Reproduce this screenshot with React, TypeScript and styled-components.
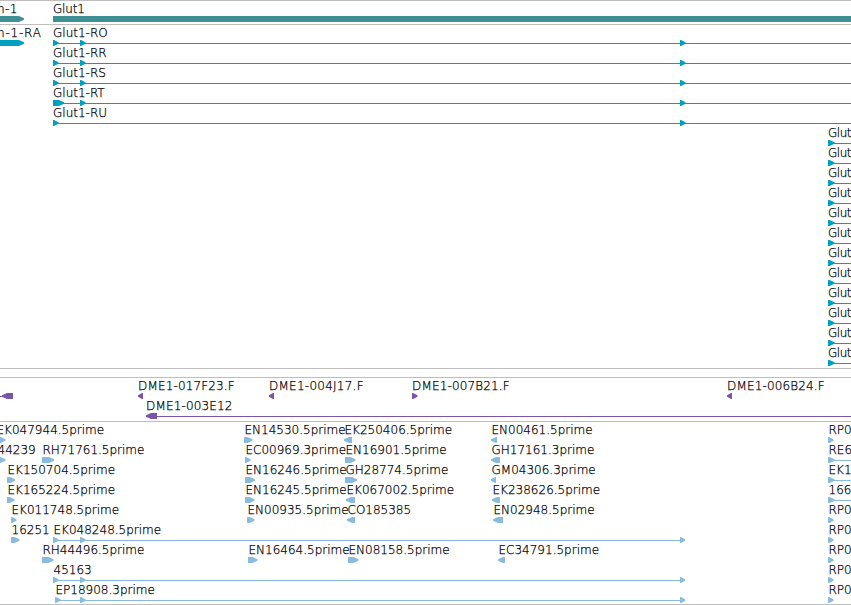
import React from "react";
import styled, { createGlobalStyle } from "styled-components";

type Direction = "right" | "left";

// [offset from the feature start, width]
type Block = [number, number];

interface FeatureData {
  label: string;
  start: number;
  span: number;
  blocks: Block[];
  dir?: Direction;
  spacing?: number;
}

interface TrackData {
  name: string;
  color: string;
  spacing?: number;
  labelShift?: number;
  rows: FeatureData[][];
}

const VIEW_END = 851;

const GlobalStyle = createGlobalStyle`
  body {
    margin: 0;
    background: #ffffff;
    overflow: hidden;
  }
`;

const Browser = styled.main`
  display: flex;
  flex-direction: column;
  width: 851px;
  height: 605px;
  overflow: hidden;
  font-family: "DejaVu Sans", sans-serif;
  font-size: 12px;
  font-weight: 200;
  color: #000000;
  -webkit-text-stroke: 0.25px #000000;
`;

const Panel = styled.section<{ $last?: boolean }>`
  border-bottom: 1px solid #bebebe;
  margin-bottom: ${({ $last }) => ($last ? 0 : 8)}px;
`;

const Track = styled.div<{ $tight?: boolean }>`
  display: flex;
  flex-direction: column;
  border-top: 1px solid #bebebe;
  padding: 1px 0 ${({ $tight }) => ($tight ? 1 : 2)}px;
`;

/* every feature of a row shares one grid cell, shifted by its start */
const Row = styled.div`
  display: grid;
  height: 20px;
  width: 851px;
  overflow: hidden;
`;

const FeatureBox = styled.div<{ $start: number }>`
  grid-area: 1 / 1;
  display: flex;
  flex-direction: column;
  align-items: flex-start;
  justify-self: start;
  margin-left: ${({ $start }) => $start}px;
`;

const Label = styled.span<{ $shift: number; $spacing: number }>`
  height: 14px;
  line-height: 15px;
  white-space: nowrap;
  margin-left: ${({ $shift }) => $shift}px;
  letter-spacing: ${({ $spacing }) => $spacing}px;
`;

const Glyph = styled.svg<{ $color: string }>`
  display: block;
  flex: none;
  fill: ${({ $color }) => $color};
`;

// most features are one short arrow
const f = (
  label: string,
  start: number,
  width: number,
  dir: Direction = "right",
  spacing?: number
): FeatureData => ({ label, start, span: width, blocks: [[0, width]], dir, spacing });

// arrows joined by an intron line
const spliced = (label: string, start: number, end: number, blocks: Block[]): FeatureData => ({
  label,
  start,
  span: end - start,
  blocks,
});

const geneTrack: TrackData = {
  name: "genes",
  color: "#3f8f96",
  rows: [[f("n-1", -3, 27, "right", 0.4), f("Glut1", 53, 810, "right", -0.2)]],
};

const transcriptTrack: TrackData = {
  name: "transcripts",
  color: "#00a0c0",
  rows: [
    [
      f("n-1-RA", -3, 27, "right", 0.8),
      spliced("Glut1-RO", 53, VIEW_END, [[0, 5.5], [27, 5.5], [627, 5.5]]),
    ],
    [spliced("Glut1-RR", 53, VIEW_END, [[0, 5.5], [27, 5.5], [627, 5.5]])],
    [spliced("Glut1-RS", 53, VIEW_END, [[0, 5.5], [27, 5.5], [627, 5.5]])],
    [spliced("Glut1-RT", 53, VIEW_END, [[0, 11], [27, 5.5], [627, 5.5]])],
    [spliced("Glut1-RU", 53, VIEW_END, [[0, 5.5], [627, 5.5]])],
    ...Array.from({ length: 12 }, () => [
      { ...spliced("Glut", 828, VIEW_END, [[0, 6.5]]), spacing: -0.5 },
    ]),
  ],
};

const bacTrack: TrackData = {
  name: "clones",
  color: "#7755aa",
  spacing: 0.15,
  rows: [
    [
      { label: "", start: -4, span: 17, blocks: [[6, 11]], dir: "left" },
      f("DME1-017F23.F", 138, 5, "left"),
      f("DME1-004J17.F", 269, 5, "left", 0.25),
      f("DME1-007B21.F", 412, 5.5),
      f("DME1-006B24.F", 727, 5, "left"),
    ],
    [{ label: "DME1-003E12", start: 146, span: 705, blocks: [[0, 11]], dir: "left" }],
  ],
};

const estTrack: TrackData = {
  name: "ests",
  color: "#88bbdd",
  labelShift: 0.5,
  rows: [
    [
      f("EK047944.5prime", -4, 9.5),
      f("EN14530.5prime", 244, 8.5),
      f("EK250406.5prime", 344, 8, "left"),
      f("EN00461.5prime", 491, 6, "left"),
      f("RP0", 828, 5.5),
    ],
    [
      f("44239", -3, 8.5),
      f("RH71761.5prime", 42, 12),
      f("EC00969.3prime", 245, 5.5),
      f("EN16901.5prime", 345, 10.5),
      f("GH17161.3prime", 491, 9, "left"),
      spliced("RE6", 828, VIEW_END, [[0, 6.5]]),
    ],
    [
      f("EK150704.5prime", 7, 8),
      f("EN16246.5prime", 245, 10),
      f("GH28774.5prime", 345, 12),
      f("GM04306.3prime", 491, 5, "left"),
      spliced("EK1", 828, VIEW_END, [[0, 6.5]]),
    ],
    [
      f("EK165224.5prime", 7, 7.5),
      f("EN16245.5prime", 245, 9.5),
      f("EK067002.5prime", 346, 9, "left"),
      f("EK238626.5prime", 492, 8, "left"),
      spliced("166", 828, VIEW_END, [[0, 6.5]]),
    ],
    [
      f("EK011748.5prime", 11, 5.5),
      f("EN00935.5prime", 247, 7.5),
      f("CO185385", 347, 8, "left"),
      f("EN02948.5prime", 493, 10, "left"),
      f("RP0", 828, 5.5),
    ],
    [
      f("16251", 11, 8.5),
      spliced("EK048248.5prime", 53, 685, [[0, 5.5], [27, 5.5], [627, 5]]),
      f("RP0", 828, 5.5),
    ],
    [
      f("RH44496.5prime", 42, 11.5),
      f("EN16464.5prime", 248, 9.5),
      f("EN08158.5prime", 348, 10.5),
      f("EC34791.5prime", 498, 7, "left"),
      f("RP0", 828, 5.5),
    ],
    [spliced("45163", 53, 685, [[0, 5.5], [27, 5.5], [627, 5]]), f("RP0", 828, 5.5)],
    [spliced("EP18908.3prime", 55, 685, [[0, 5.5], [25, 5.5], [625, 5]]), f("RP0", 828, 5.5)],
  ],
};

const arrowPoints = (x: number, width: number, dir: Direction) => {
  const head = Math.min(width, 6);
  const end = x + width;
  if (dir === "left") {
    return `${end},0 ${x + head - 1},0 ${x},2.2 ${x},3.8 ${x + head - 1},6 ${end},6`;
  }
  return `${x},0 ${end - head + 1},0 ${end},2.2 ${end},3.8 ${end - head + 1},6 ${x},6`;
};

const Feature: React.FC<{ data: FeatureData; track: TrackData }> = ({ data, track }) => {
  const { label, start, span, blocks, dir = "right" } = data;
  return (
    <FeatureBox $start={start}>
      <Label $shift={track.labelShift ?? 0} $spacing={data.spacing ?? track.spacing ?? 0}>
        {label}
      </Label>
      <Glyph $color={track.color} width={span} height={6}>
        {span > blocks[0][1] && <rect x={0} y={3} width={span} height={1} />}
        {blocks.map(([x, width]) => (
          <polygon key={x} points={arrowPoints(x, width, dir)} />
        ))}
      </Glyph>
    </FeatureBox>
  );
};

const TrackView: React.FC<{ track: TrackData; tight?: boolean }> = ({ track, tight }) => (
  <Track $tight={tight}>
    {track.rows.map((row, i) => (
      <Row key={`${track.name}-${i}`}>
        {row.map((item) => (
          <Feature key={item.start} data={item} track={track} />
        ))}
      </Row>
    ))}
  </Track>
);

const App: React.FC = () => (
  <>
    <GlobalStyle />
    <Browser>
      <Panel>
        <TrackView track={geneTrack} />
        <TrackView track={transcriptTrack} />
      </Panel>
      <Panel $last>
        <TrackView track={bacTrack} />
        <TrackView track={estTrack} tight />
      </Panel>
    </Browser>
  </>
);

export default App;
